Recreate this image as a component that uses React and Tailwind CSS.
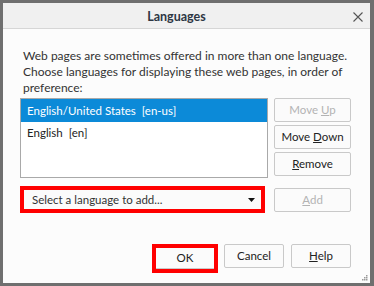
const font = { fontFamily: 'Lato, "Open Sans", sans-serif' }

function Btn({ children, disabled, className = '' }) {
  return (
    <div
      className={`flex items-center justify-center rounded-[2px] border border-[#c9c9c9] bg-[#fbfbfb] text-[11.5px] ${
        disabled ? 'text-[#b3b3b3]' : 'text-[#222]'
      } ${className}`}
    >
      <span className="whitespace-pre">{children}</span>
    </div>
  )
}

function Grip() {
  const dots = [
    [4, 0],
    [2, 2], [4, 2],
    [0, 4], [2, 4], [4, 4],
  ]
  return (
    <svg className="absolute bottom-[2px] right-[2px]" width="6" height="6" viewBox="0 0 6 6">
      {dots.map(([x, y]) => (
        <rect key={`${x}-${y}`} x={x} y={y} width="1.5" height="1.5" fill="#9a9a9a" />
      ))}
    </svg>
  )
}

export default function App() {
  return (
    <div className="h-[286px] w-[374px] bg-[#6f6f6f] pl-[3px] pt-[3px]" style={font}>
      <div className="flex h-[280px] w-[367px] flex-col bg-[#fcfcfc]">
        <div className="relative flex h-[26px] items-center justify-center border-b border-[#d6d6d6] bg-[#f0f0f0] pr-[20px] pt-[3px]">
          <span className="text-[12.5px] font-bold text-[#2d3643]">Languages</span>
          <svg className="absolute right-[7px] top-[9px]" width="10" height="10" viewBox="0 0 10 10">
            <path d="M0.5 0.5 L9.5 9.5 M9.5 0.5 L0.5 9.5" stroke="#555" strokeWidth="1.1" />
          </svg>
        </div>

        <div className="relative flex-1 pl-[17px] pr-[19px] pt-[19px]">
          <p className="whitespace-nowrap pl-[3px] text-[12px] leading-[16px] text-[#333]">
            Web pages are sometimes offered in more than one language.
            <br />
            Choose languages for displaying these web pages, in order of
            <br />
            preference:
          </p>

          <div className="mt-[2px] flex gap-[6px]">
            <div className="h-[80px] w-[248px] border border-[#a9a9a9] bg-white text-[11.5px]">
              <div className="flex h-[23px] items-center bg-[#0c8ad8] pl-[6px] text-white">
                <span className="whitespace-pre">English/United States  [en-us]</span>
              </div>
              <div className="flex h-[22px] items-center pl-[6px] text-[#222]">
                <span className="whitespace-pre">English  [en]</span>
              </div>
            </div>
            <div className="flex w-[77px] flex-col gap-[3px]">
              <Btn disabled className="h-[24px]">
                Move <u>U</u>p
              </Btn>
              <Btn className="h-[24px]">
                Move <u>D</u>own
              </Btn>
              <Btn className="h-[24px]">
                <u>R</u>emove
              </Btn>
            </div>
          </div>

          <div className="mt-[8px] flex items-center gap-[9px]">
            <div className="flex h-[27px] w-[246px] items-center justify-between border-[4px] border-[#ff0000] bg-[#fbfbfb] pl-[8px] pr-[6px] text-[11.5px] text-[#333]">
              <span>Select a language to add...</span>
              <svg width="7" height="4" viewBox="0 0 7 4">
                <path d="M0 0 H7 L3.5 4 Z" fill="#111" />
              </svg>
            </div>
            <Btn disabled className="h-[24px] w-[77px]">
              <u>A</u>dd
            </Btn>
          </div>

          <div className="mt-[31px] flex items-start justify-end gap-[6px]">
            <div className="h-[29px] w-[66px] border-[4px] border-[#ff0000] bg-[#fbfbfb]">
              <div className="flex h-full items-center justify-center border-b border-[#c9c9c9] text-[11.5px] text-[#222]">
                OK
              </div>
            </div>
            <Btn className="h-[24px] w-[60px]">Cancel</Btn>
            <Btn className="ml-[1px] h-[24px] w-[60px]">
              <u>H</u>elp
            </Btn>
          </div>
          <Grip />
        </div>
      </div>
    </div>
  )
}
